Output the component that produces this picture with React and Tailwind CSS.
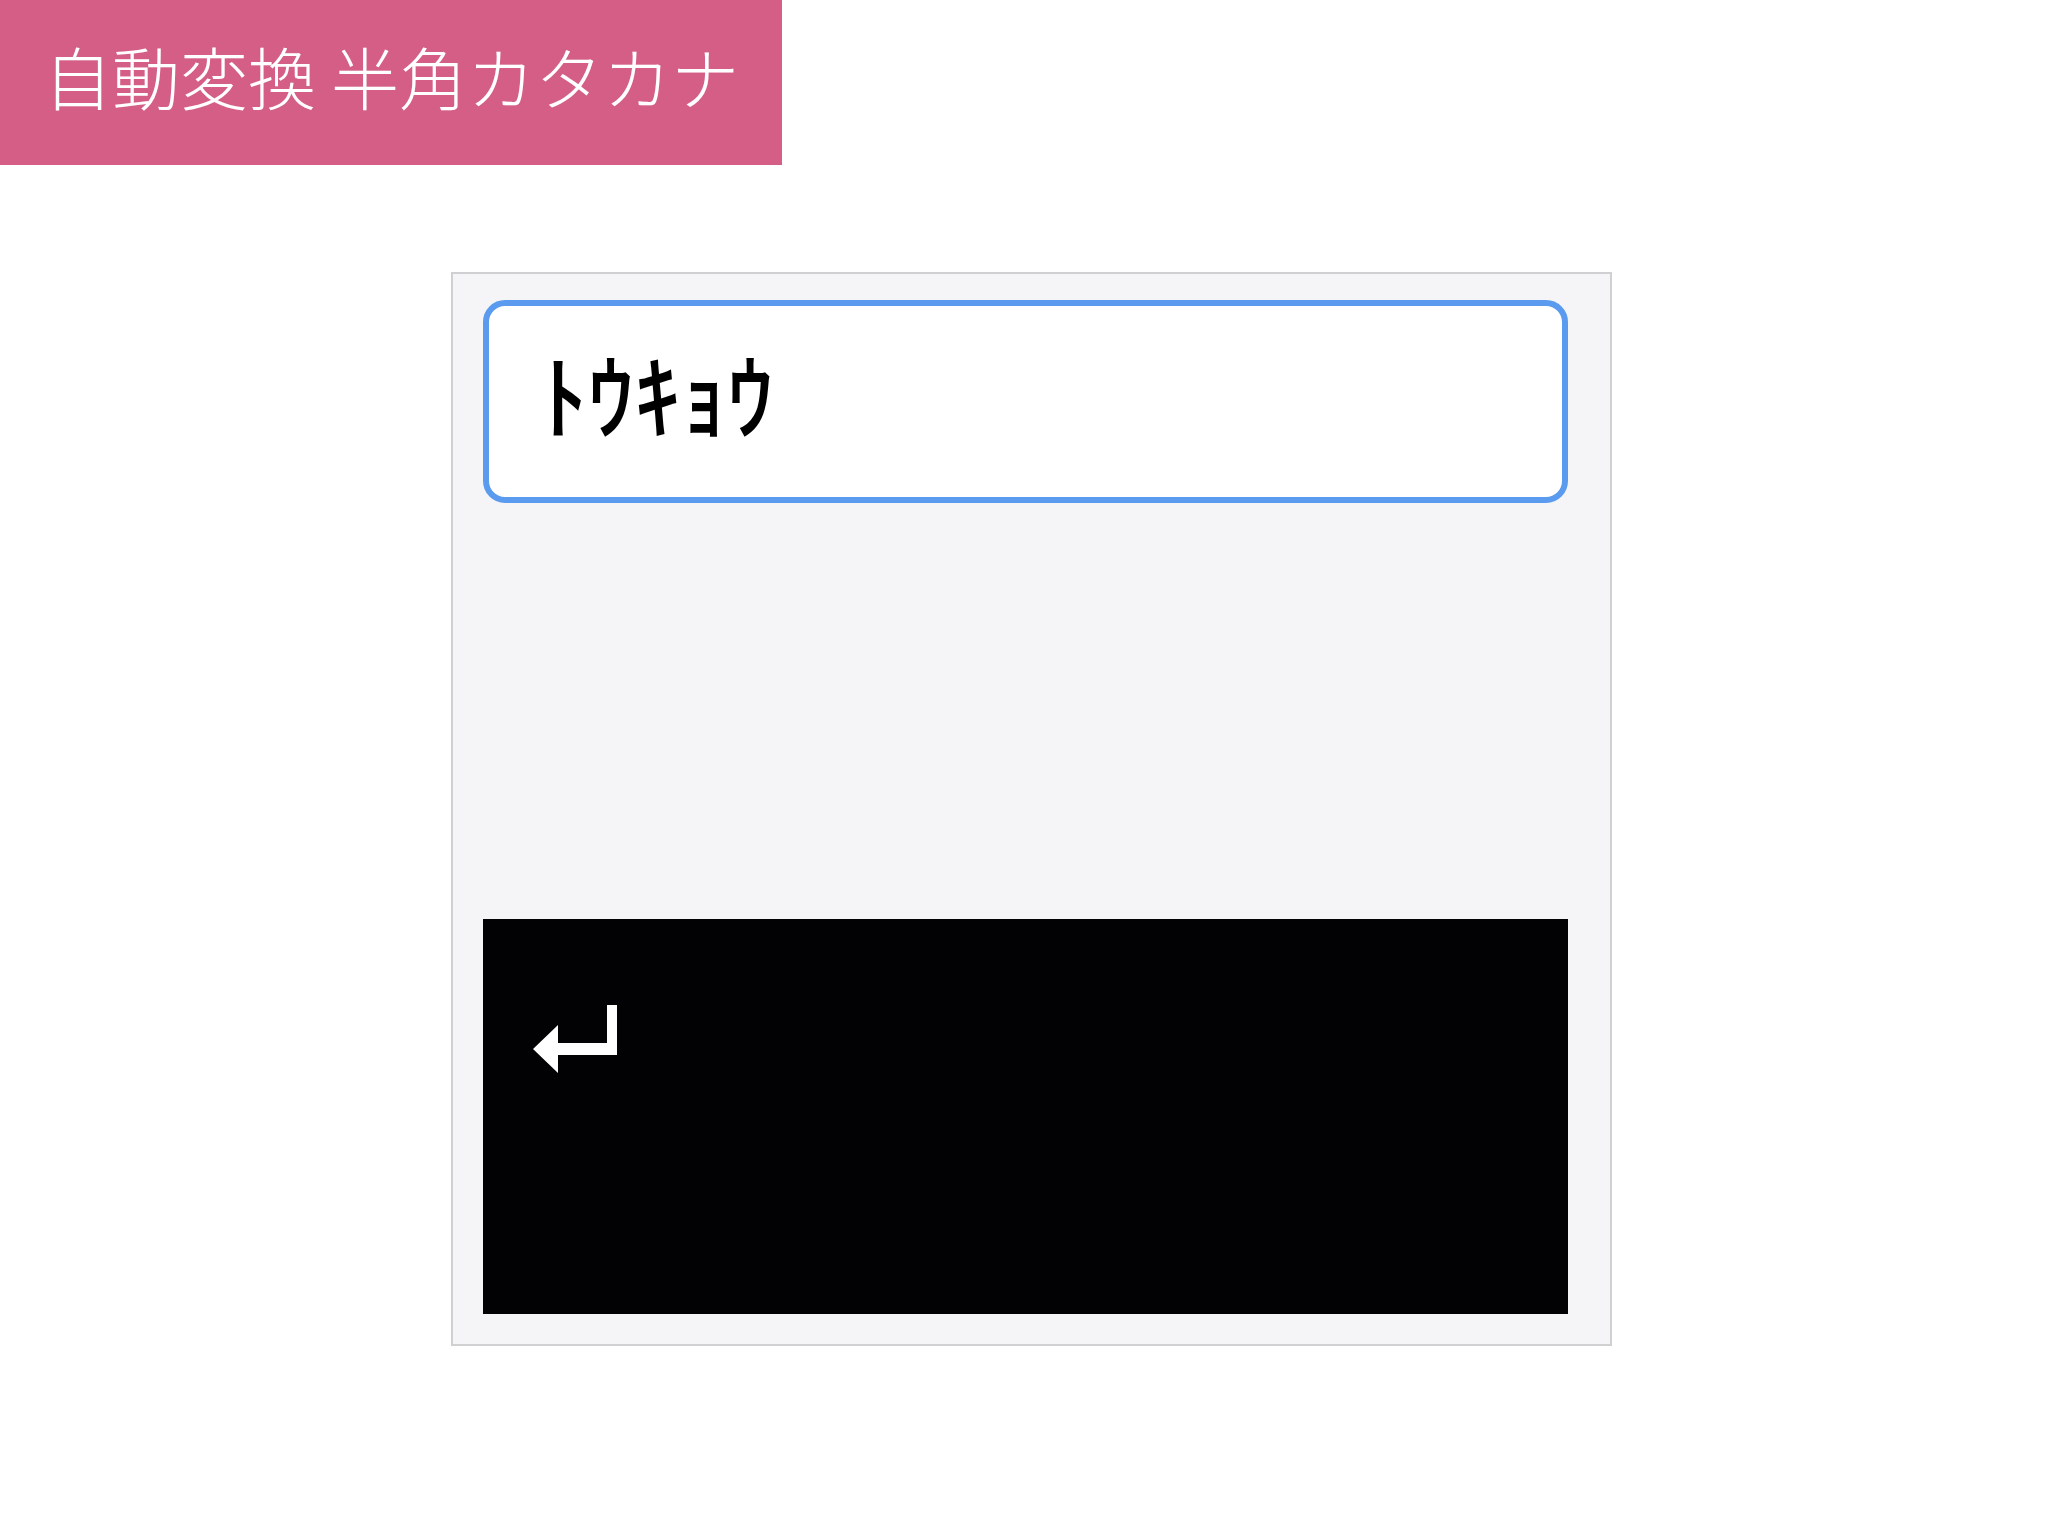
const ReturnIcon = () => (
    <svg width="84" height="68" viewBox="0 0 84 68" className="block">
        <polygon points="0,44 25,20 25,38 74,38 74,0 84,0 84,50 25,50 25,68" fill="#ffffff" />
    </svg>
)

const App = () => {
    return (
        <div className="w-[2048px] h-[1536px] bg-white flex flex-col" style={{ fontFamily: '"Noto Sans CJK JP", "Noto Sans", sans-serif' }}>
            {/* title banner */}
            <div className="w-[782px] h-[165px] bg-[#d45e86] flex items-center pl-[44px] pb-[14px]">
                <span className="text-white text-[68px] font-light leading-none">自動変換 半角カタカナ</span>
            </div>

            {/* phone-like panel */}
            <div className="ml-[451px] mt-[107px] w-[1161px] h-[1074px] border-2 border-[#d0d0d3] bg-[#f5f4f7] flex flex-col pt-[26px] pl-[30px] pr-[42px] pb-[30px]">
                <div className="h-[203px] rounded-[22px] border-[6px] border-[#5b9bef] bg-white flex items-center pl-[52px] pb-[20px]">
                    <span className="text-black text-[93px] font-medium leading-none">ﾄｳｷｮｳ</span>
                </div>

                <div className="flex-1" />

                <div className="h-[395px] bg-[#020104] pl-[50px] pt-[86px]">
                    <ReturnIcon />
                </div>
            </div>
        </div>
    )
}

export default App
